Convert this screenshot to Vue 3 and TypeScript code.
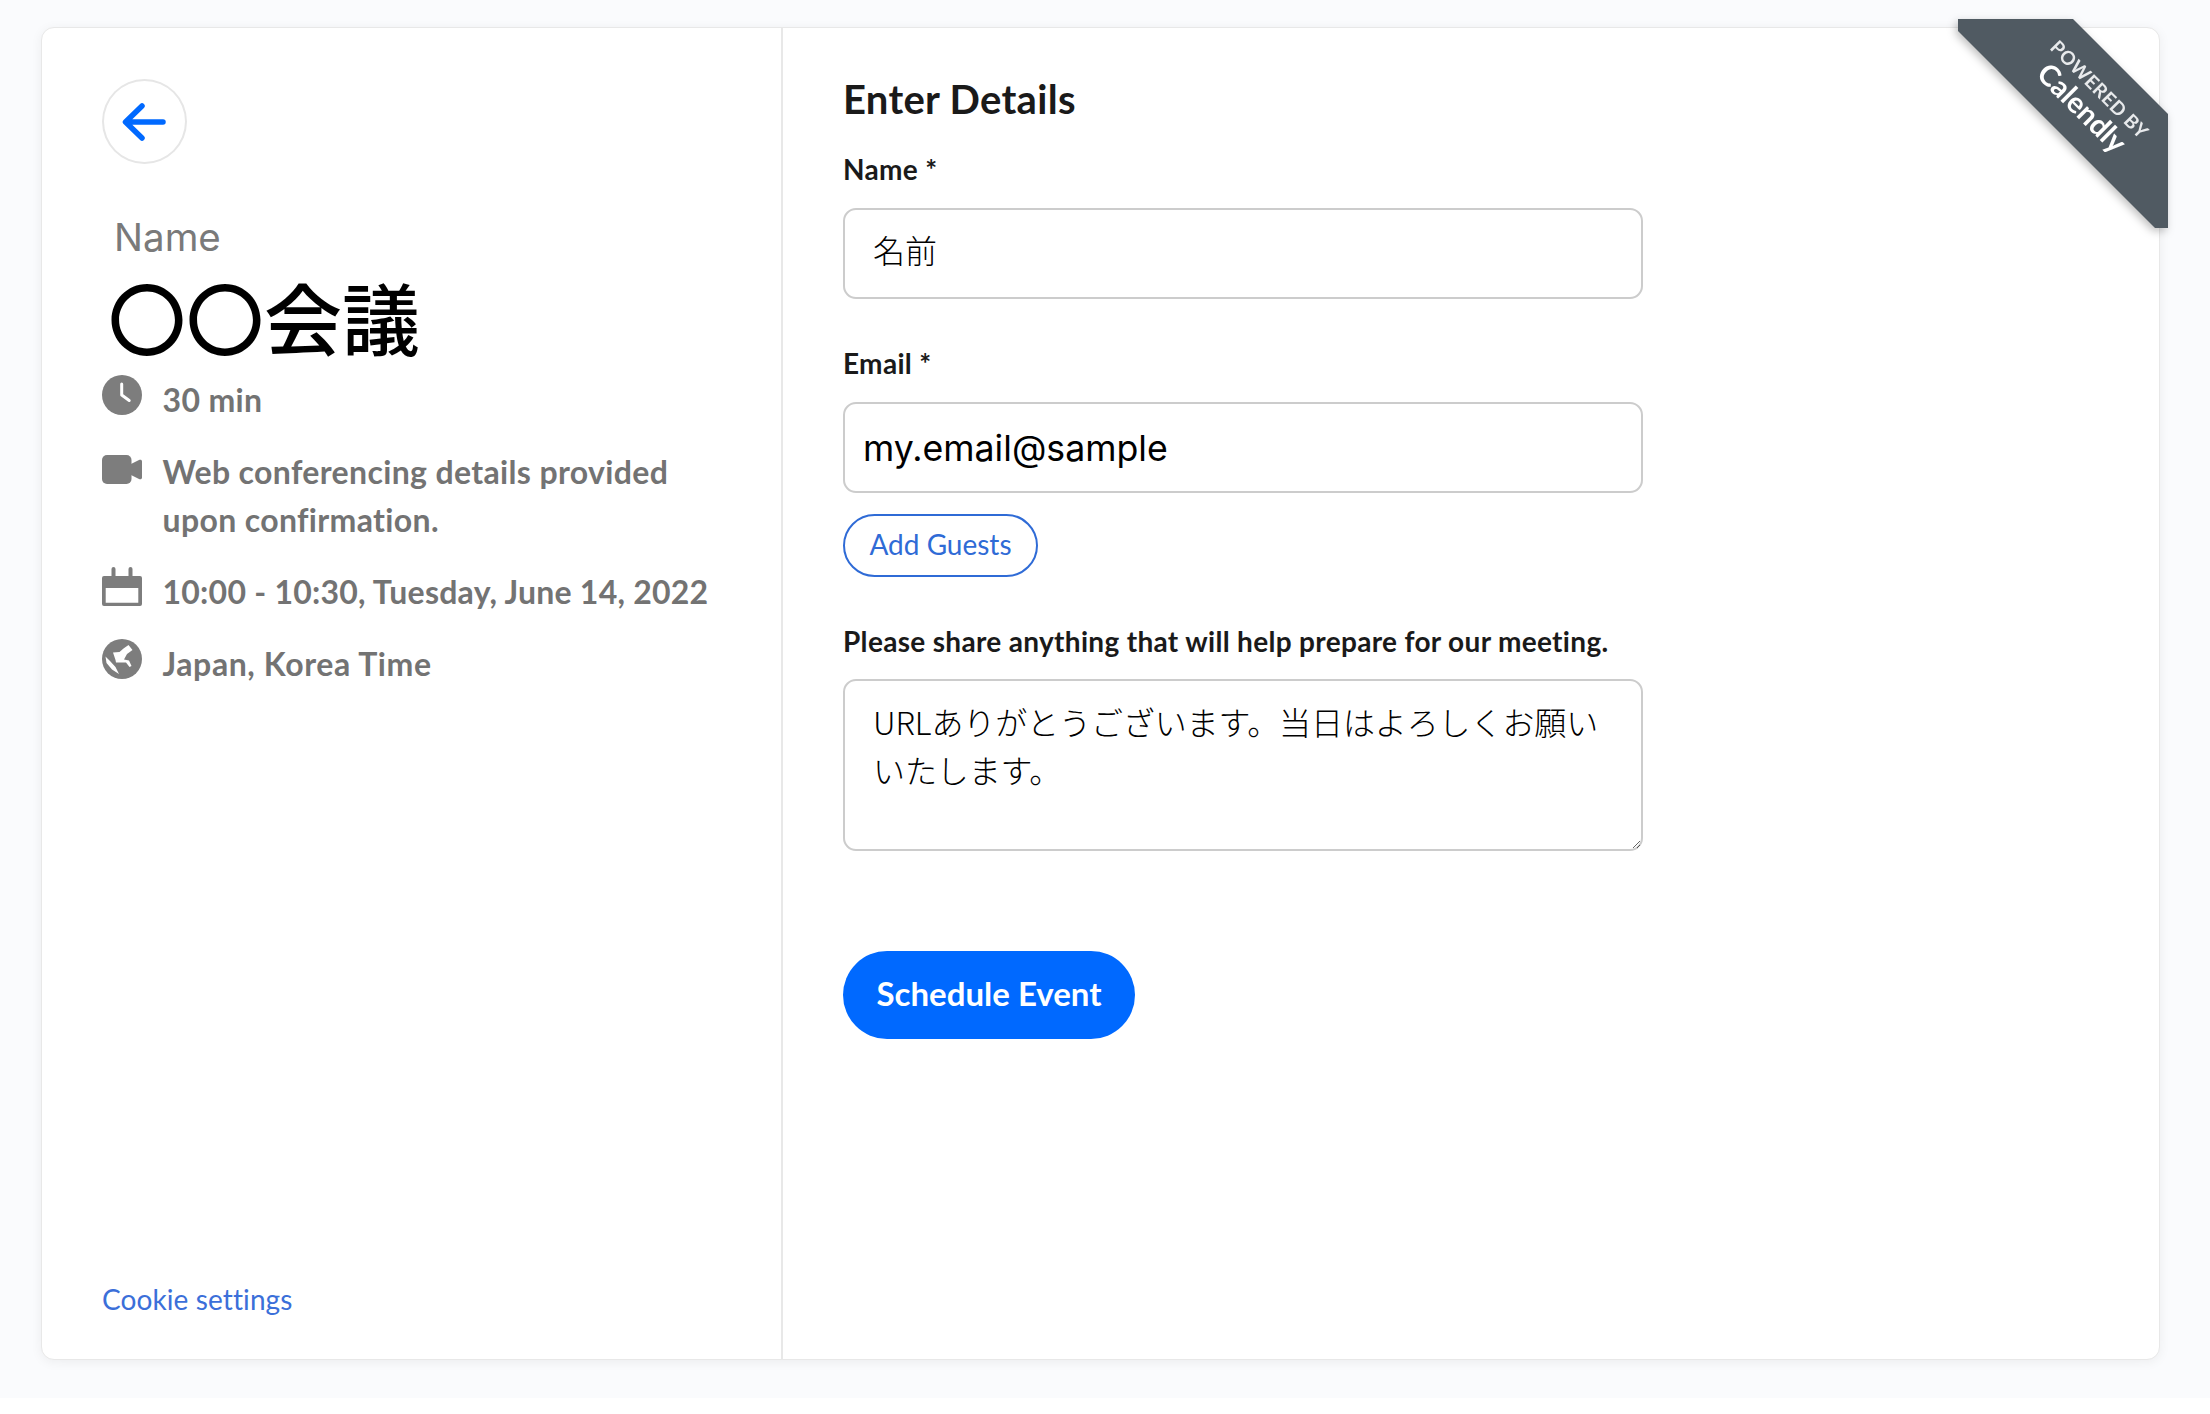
<script setup lang="ts">
const nameValue = '名前'
const emailValue = 'my.email@sample'
const noteValue = 'URLありがとうございます。当日はよろしくお願い\nいたします。'
</script>

<template>
  <div class="page">
    <main class="card">
      <aside class="summary">
        <button class="back" type="button" aria-label="Back">
          <svg viewBox="0 0 84 84" width="84" height="84" fill="none" stroke="#0069ff" stroke-width="5.5" stroke-linecap="round" stroke-linejoin="round">
            <path d="M61 42H24M40 26 23.500 42 40 58" />
          </svg>
        </button>
        <p class="host">Name</p>
        <h1 class="event">〇〇会議</h1>
        <ul class="facts">
          <li class="fact">
            <svg class="icon" viewBox="0 0 40 40"><circle cx="20" cy="20" r="20" fill="#7d7d7d" /><path d="M19.700 9v11l7.500 5.500" fill="none" stroke="#fff" stroke-width="3" stroke-linecap="round" stroke-linejoin="round" /></svg>
            <span>30 min</span>
          </li>
          <li class="fact">
            <svg class="icon" viewBox="0 0 40 40"><rect x="0" y="8" width="29.500" height="29" rx="5" fill="#7d7d7d" /><path d="M29 17l8-4c1.500-.7 3-.2 3 1.500v16c0 1.700-1.500 2.200-3 1.500l-8-4z" fill="#7d7d7d" /></svg>
            <span>Web conferencing details provided<br />upon confirmation.</span>
          </li>
          <li class="fact fact-time">
            <svg class="icon" viewBox="0 0 40 40"><path fill="#7d7d7d" fill-rule="evenodd" d="M9.500 2a2 2 0 0 1 4 0v7h13V2a2 2 0 0 1 4 0v7H38a2 2 0 0 1 2 2v26a2 2 0 0 1-2 2H2a2 2 0 0 1-2-2V11a2 2 0 0 1 2-2h7.500zM3.700 21v14.700h32.600V21z" /></svg>
            <span>10:00 - 10:30, Tuesday, June 14, 2022</span>
          </li>
          <li class="fact fact-zone">
            <svg class="icon" viewBox="0 0 40 40"><circle cx="20" cy="20" r="20" fill="#7d7d7d" /><path fill="#fff" d="M11 13.500 17.500 13l4-3.500 5-3.500 4 5-5.500 4-3 5.500 5 1 2.500 5.500-2 1-3.500-4.500H14l-.5-2.500-1-3zM3.500 17.500 8 22l5.500 6 3.500 7-7-4.500-5.500-6.500z" /></svg>
            <span>Japan, Korea Time</span>
          </li>
        </ul>
        <a class="cookie" href="#">Cookie settings</a>
      </aside>

      <section class="details">
        <h2 class="title">Enter Details</h2>
        <form class="form" @submit.prevent>
          <label class="label" for="f-name">Name *</label>
          <input id="f-name" class="field field-name" type="text" :value="nameValue" />

          <label class="label label-next" for="f-email">Email *</label>
          <input id="f-email" class="field field-email" type="text" :value="emailValue" />
          <button class="guests" type="button">Add Guests</button>

          <label class="label label-next" for="f-note">Please share anything that will help prepare for our meeting.</label>
          <textarea id="f-note" class="note" :value="noteValue"></textarea>

          <button class="submit" type="submit">Schedule Event</button>
        </form>
      </section>

      <div class="ribbon-wrap">
        <div class="ribbon">
          <span class="rib-small">POWERED BY</span>
          <span class="rib-big">Calendly</span>
        </div>
      </div>
    </main>
  </div>
</template>

<style>
html, body { background: #fff; }
</style>

<style scoped>
.page {
  height: 1398px;
  box-sizing: border-box;
  padding: 27px 50px 38px 41px;
  background: #fafbfd;
  font-family: Lato, "Noto Sans CJK JP", sans-serif;
  color: #1a1a1a;
}
.card {
  position: relative;
  display: flex;
  height: 1333px;
  box-sizing: border-box;
  background: #fff;
  border: 1px solid #e8e8e8;
  border-radius: 13px;
  box-shadow: 0 2px 12px rgba(0, 0, 0, .06);
}
.summary {
  width: 741px;
  box-sizing: border-box;
  display: flex;
  flex-direction: column;
  padding: 51px 40px 40px 60px;
  border-right: 2px solid #e8e8e8;
}
.back {
  width: 85px;
  height: 85px;
  padding: 0;
  background: #fff;
  border: 0;
  border-radius: 50%;
  box-shadow: inset 0 0 0 2px #e6e6e6;
}
.back svg { display: block; }
.host {
  margin: 48px 0 0 12px;
  font-family: Inter, sans-serif;
  font-size: 38.500px;
  line-height: 50px;
  color: #7a7a7a;
}
.event {
  margin: 9px 0 0 6px;
  font-family: "Noto Sans CJK JP", sans-serif;
  font-size: 78px;
  font-weight: 500;
  line-height: 90px;
  color: #000;
}
.facts {
  list-style: none;
  margin: 15px 0 0;
  padding: 0;
  display: flex;
  flex-direction: column;
  gap: 24px;
}
.fact {
  display: flex;
  align-items: flex-start;
  gap: 20.500px;
  font-size: 32px;
  font-weight: 700;
  letter-spacing: .35px;
  line-height: 48px;
  color: #737373;
}
.fact-time { letter-spacing: .24px; }
.fact-zone { letter-spacing: .6px; }
.icon {
  flex: none;
  width: 40px;
  height: 40px;
  margin-top: -1px;
}
.cookie {
  margin-top: auto;
  font-size: 28px;
  letter-spacing: .1px;
  line-height: 40px;
  color: #3b6fd9;
  text-decoration: none;
}
.details {
  flex: 1;
  padding: 49px 0 0 60px;
}
.title {
  margin: 0;
  font-size: 40px;
  font-weight: 700;
  letter-spacing: .3px;
  line-height: 44px;
}
.form {
  display: flex;
  flex-direction: column;
  align-items: flex-start;
  margin-top: 33px;
}
.label {
  font-size: 28px;
  font-weight: 700;
  letter-spacing: .32px;
  line-height: 30px;
  margin-bottom: 24px;
}
.label-next { margin-top: 49px; }
.field, .note {
  width: 800px;
  box-sizing: border-box;
  border: 2px solid #cccccc;
  border-radius: 13px;
  background: #fff;
  color: #000;
  outline: none;
}
.field { height: 91px; }
.field-name {
  padding: 0 0 9px 28px;
  font-family: "Noto Sans CJK JP", sans-serif;
  font-size: 32px;
  font-weight: 300;
}
.field-email {
  padding: 0 0 0 18px;
  font-family: Inter, sans-serif;
  font-size: 35.700px;
}
.guests {
  margin-top: 21px;
  width: 195px;
  height: 63px;
  padding: 0 0 3px;
  background: #fff;
  border: 2px solid #2f6bd6;
  border-radius: 32px;
  color: #2f6bd6;
  font-family: Lato, sans-serif;
  font-size: 28px;
}
.note {
  height: 172px;
  margin-top: -1px;
  padding: 16px 10px 0 28px;
  font-family: "Noto Sans CJK JP", sans-serif;
  font-size: 32px;
  font-weight: 300;
  letter-spacing: -.1px;
  line-height: 48px;
  resize: both;
}
.submit {
  margin-top: 100px;
  width: 292px;
  height: 88px;
  padding: 0 0 4px;
  background: #0069ff;
  border: 0;
  border-radius: 44px;
  color: #fff;
  font-family: Lato, sans-serif;
  font-size: 33px;
  font-weight: 700;
}
.ribbon-wrap {
  position: absolute;
  left: 1916px;
  top: -9px;
  width: 210px;
  height: 209px;
  filter: drop-shadow(-2px 3px 4px rgba(0, 0, 0, .25));
  pointer-events: none;
}
.ribbon {
  position: relative;
  width: 100%;
  height: 100%;
  background: #505a62;
  clip-path: polygon(0 0, 115px 0, 210px 95px, 210px 209px, 197px 209px, 0 12px);
  color: #fff;
}
.rib-small, .rib-big {
  position: absolute;
  white-space: nowrap;
  transform: translate(-50%, -50%) rotate(45deg);
  font-family: Lato, sans-serif;
}
.rib-small {
  left: 142px;
  top: 70px;
  font-size: 19px;
  font-weight: 700;
  letter-spacing: .5px;
  color: #e8eaec;
}
.rib-big {
  left: 125px;
  top: 88px;
  font-size: 29px;
  font-weight: 700;
}
</style>
